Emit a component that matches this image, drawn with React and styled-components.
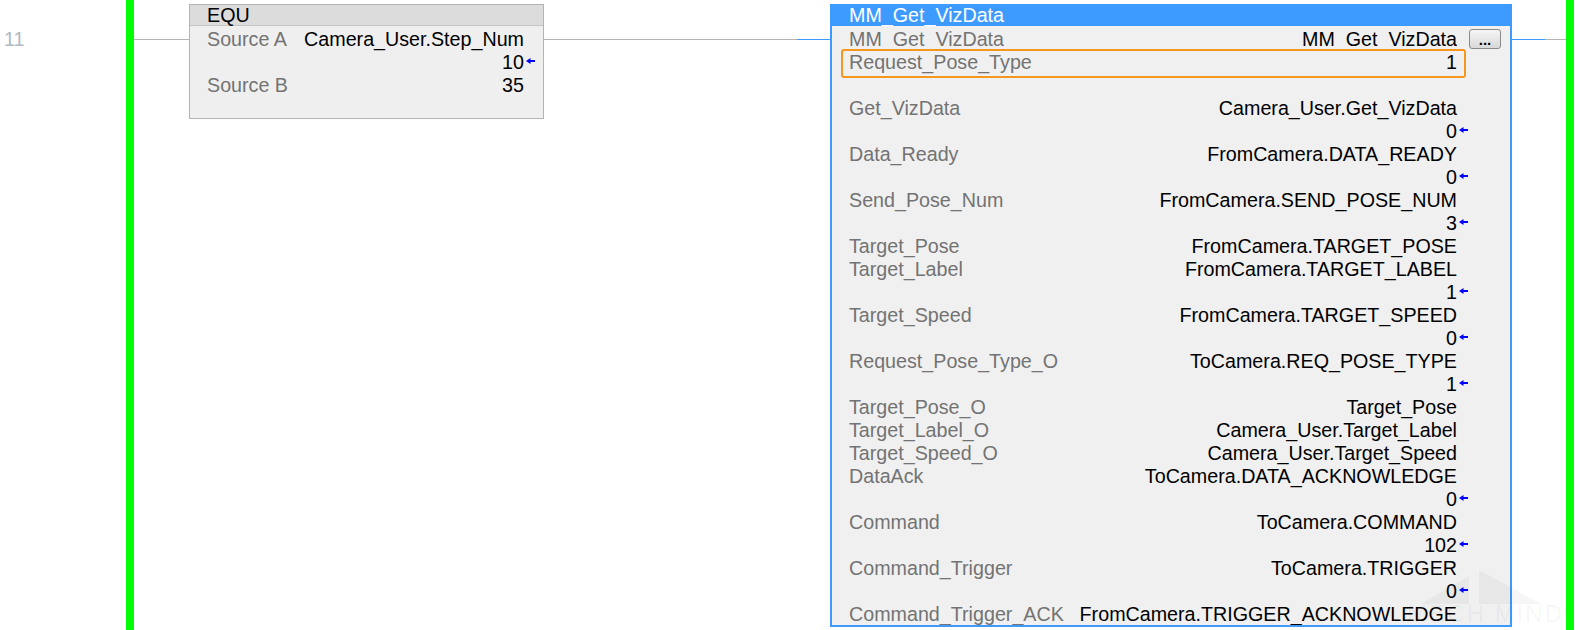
import React from 'react'
import styled, { createGlobalStyle } from 'styled-components'

const GlobalStyle = createGlobalStyle`
  html, body {
    margin: 0;
    padding: 0;
    background: #fff;
  }
  body {
    font-family: "Liberation Sans", Arial, sans-serif;
    font-size: 19.7px;
  }
  * { box-sizing: border-box; }
`

const equRows = [
  { label: 'Source A', value: 'Camera_User.Step_Num' },
  { label: '', value: '10', arrow: true },
  { label: 'Source B', value: '35' },
]

const vizRows = [
  { label: 'Get_VizData', value: 'Camera_User.Get_VizData' },
  { label: '', value: '0', arrow: true },
  { label: 'Data_Ready', value: 'FromCamera.DATA_READY' },
  { label: '', value: '0', arrow: true },
  { label: 'Send_Pose_Num', value: 'FromCamera.SEND_POSE_NUM' },
  { label: '', value: '3', arrow: true },
  { label: 'Target_Pose', value: 'FromCamera.TARGET_POSE' },
  { label: 'Target_Label', value: 'FromCamera.TARGET_LABEL' },
  { label: '', value: '1', arrow: true },
  { label: 'Target_Speed', value: 'FromCamera.TARGET_SPEED' },
  { label: '', value: '0', arrow: true },
  { label: 'Request_Pose_Type_O', value: 'ToCamera.REQ_POSE_TYPE' },
  { label: '', value: '1', arrow: true },
  { label: 'Target_Pose_O', value: 'Target_Pose' },
  { label: 'Target_Label_O', value: 'Camera_User.Target_Label' },
  { label: 'Target_Speed_O', value: 'Camera_User.Target_Speed' },
  { label: 'DataAck', value: 'ToCamera.DATA_ACKNOWLEDGE' },
  { label: '', value: '0', arrow: true },
  { label: 'Command', value: 'ToCamera.COMMAND' },
  { label: '', value: '102', arrow: true },
  { label: 'Command_Trigger', value: 'ToCamera.TRIGGER' },
  { label: '', value: '0', arrow: true },
  { label: 'Command_Trigger_ACK', value: 'FromCamera.TRIGGER_ACKNOWLEDGE' },
]

function Arrow() {
  return (
    <ArrowIcon viewBox="0 0 9 6" width="9" height="6">
      <polygon points="0,3 4.5,0 4.5,6" fill="#0000ff" />
      <rect x="4" y="2" width="5" height="2" fill="#0000ff" />
    </ArrowIcon>
  )
}

function Value({ text, arrow }) {
  return (
    <Val>
      {text}
      {arrow && <Arrow />}
    </Val>
  )
}

export default function App() {
  return (
    <>
      <GlobalStyle />
      <Page>
        <Gutter>11</Gutter>
        <Rail />
        <Rung>
          <Wire $w={55} />
          <EquBox>
            <EquHeader>EQU</EquHeader>
            <EquBody>
              {equRows.map((r, i) => (
                <EquRow key={i}>
                  <Label>{r.label}</Label>
                  <Value text={r.value} arrow={r.arrow} />
                </EquRow>
              ))}
            </EquBody>
          </EquBox>
          <Wire $w={253} />
          <Wire $w={33} $blue />
          <FuncBox>
            <FuncHeader>MM_Get_VizData</FuncHeader>
            <FuncBody>
              <Row>
                <Clip><Label>MM_Get_VizData</Label></Clip>
                <Clip><Val>MM_Get_VizData</Val></Clip>
                <MoreButton>...</MoreButton>
              </Row>
              <Row $active>
                <Label>Request_Pose_Type</Label>
                <Val>1</Val>
              </Row>
              <Row />
              {vizRows.map((r, i) => (
                <Row key={i}>
                  <Label>{r.label}</Label>
                  <Value text={r.value} arrow={r.arrow} />
                </Row>
              ))}
            </FuncBody>
          </FuncBox>
          <Wire $w={33} $blue />
          <Wire $w={21} />
        </Rung>
        <Rail />
        <Watermark>
          <svg width="150" height="40" viewBox="0 0 150 40">
            <polygon points="10,38 58,10 58,38" fill="rgba(0,0,0,0.035)" />
            <polygon points="68,38 68,4 130,38" fill="rgba(0,0,0,0.035)" />
          </svg>
          <WatermarkText>MECH MIND</WatermarkText>
        </Watermark>
      </Page>
    </>
  )
}

const Page = styled.div`
  position: relative;
  display: flex;
  width: 1576px;
  height: 630px;
  overflow: hidden;
  background: #fff;
`

const Gutter = styled.div`
  width: 126px;
  padding: 28px 0 0 4px;
  line-height: 23px;
  color: #b0b8c4;
`

const Rail = styled.div`
  width: 8px;
  height: 100%;
  background: #00ff00;
`

const Rung = styled.div`
  display: flex;
  align-items: flex-start;
  padding-top: 4px;
  width: 1432px;
`

const Wire = styled.div`
  width: ${p => p.$w}px;
  height: 1px;
  margin-top: 35px;
  background: ${p => (p.$blue ? '#3d9bff' : '#b4b4b4')};
  flex-shrink: 0;
`

const EquBox = styled.div`
  width: 355px;
  height: 115px;
  border: 1px solid #b4b4b4;
  background: #efefef;
  flex-shrink: 0;
`

const EquHeader = styled.div`
  height: 21px;
  line-height: 21px;
  padding-left: 17px;
  background: #dcdcdc;
  border-bottom: 1px solid #c4c4c4;
  color: #000;
`

const EquBody = styled.div`
  padding: 2px 19px 0 17px;
`

const EquRow = styled.div`
  display: flex;
  justify-content: space-between;
  height: 23px;
  line-height: 23px;
  white-space: nowrap;
`

const Label = styled.span`
  color: #737373;
  white-space: nowrap;
`

const Val = styled.span`
  margin-left: auto;
  color: #000;
  white-space: nowrap;
`

const ArrowIcon = styled.svg`
  display: inline-block;
  vertical-align: 5px;
  margin-left: 2px;
  margin-right: -11px;
`

const FuncBox = styled.div`
  width: 682px;
  height: 623px;
  border: 2px solid #3d9bff;
  background: #f0f0f0;
  overflow: hidden;
  flex-shrink: 0;
`

const FuncHeader = styled.div`
  height: 20px;
  line-height: 19px;
  padding-left: 17px;
  background: #3d9bff;
  color: #fff;
`

const FuncBody = styled.div`
  padding: 2px 53px 0 17px;
`

const Row = styled.div`
  position: relative;
  display: flex;
  align-items: flex-start;
  height: 23px;
  line-height: 23px;

  ${p => p.$active && `
    &::after {
      content: '';
      position: absolute;
      top: -2px;
      bottom: -4px;
      left: -8px;
      right: -9px;
      border: 2px solid #f5961e;
      border-radius: 3px;
      pointer-events: none;
    }
  `}
`

const Clip = styled.span`
  display: block;
  height: 19px;
  overflow: hidden;
  &:nth-child(2) {
    margin-left: auto;
  }
`

const MoreButton = styled.div`
  width: 32px;
  height: 20px;
  margin: 1px -44px 0 12px;
  border: 1px solid #8a8a8a;
  border-radius: 3px;
  background: linear-gradient(#f6f6f6, #d8d8d8);
  font-size: 15px;
  font-weight: bold;
  line-height: 20px;
  text-align: center;
  color: #000;
  flex-shrink: 0;
`

const Watermark = styled.div`
  position: absolute;
  right: 12px;
  bottom: 2px;
  display: flex;
  flex-direction: column;
  align-items: center;
  pointer-events: none;
`

const WatermarkText = styled.div`
  margin-top: -6px;
  font-size: 24px;
  letter-spacing: 2px;
  color: rgba(0, 0, 0, 0.045);
  white-space: nowrap;
`
